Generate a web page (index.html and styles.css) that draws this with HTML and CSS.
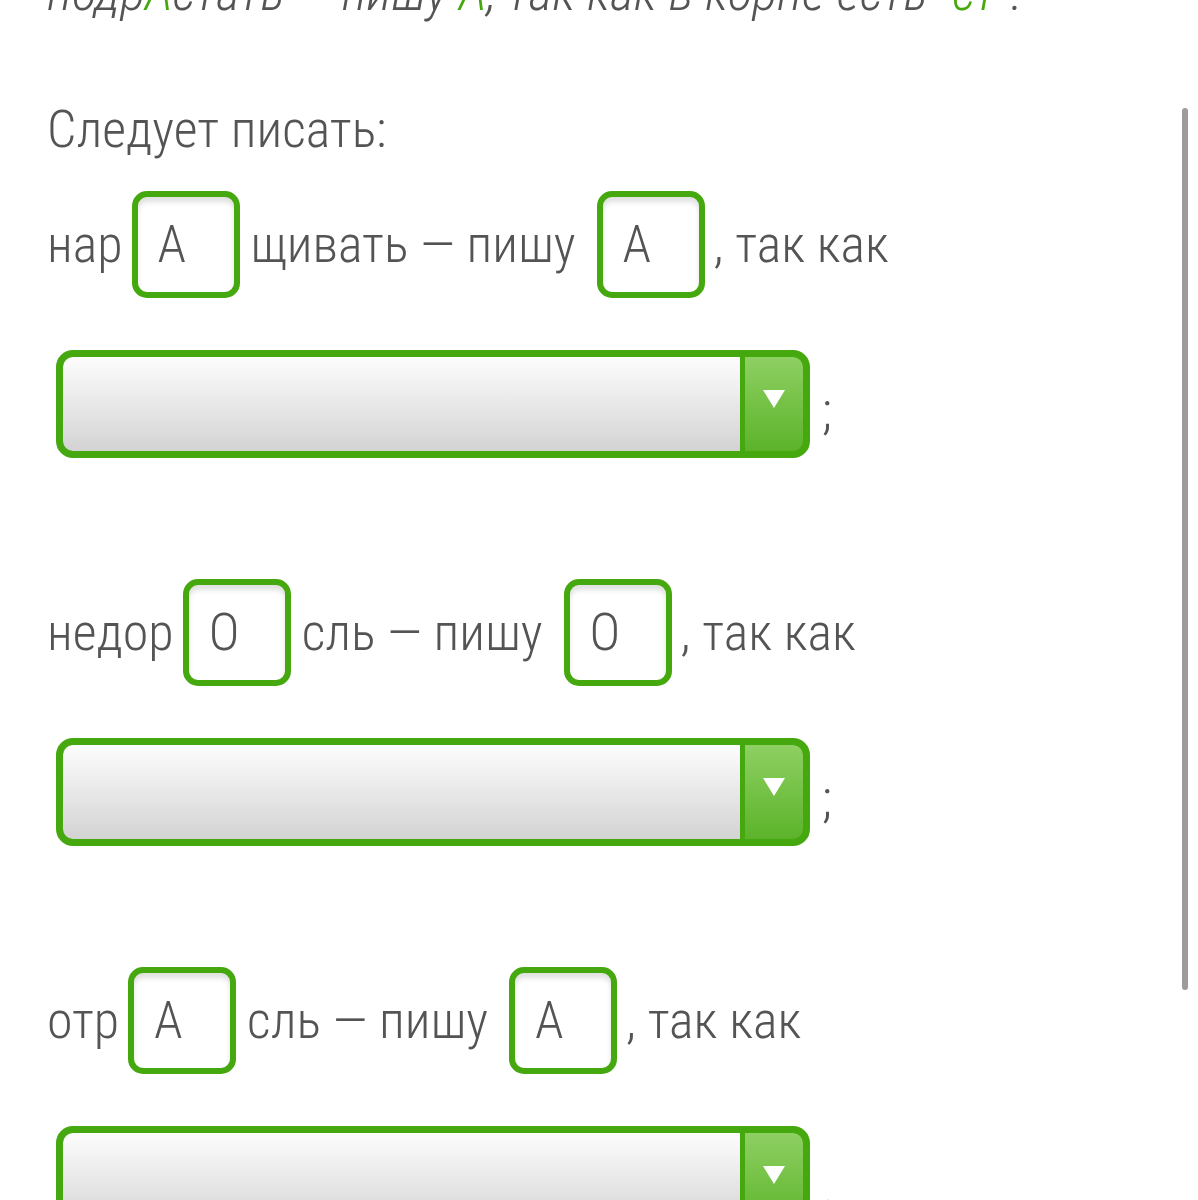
FILE: index.html
```html
<!DOCTYPE html>
<html lang="ru">
<head>
    <meta charset="UTF-8" />
    <title>Следует писать</title>
    <link rel="stylesheet" href="styles.css">
</head>
<body>
    <div class="page">
        <!-- previous answer, scrolled off the top -->
        <p class="prev">подр<span class="hl">А</span>стать — пишу <span class="hl">А</span>, так как в корне есть "<span class="hl">ст</span>".</p>

        <p class="lead">Следует писать:</p>

        <div class="task">
            <div class="line">
                <span>нар</span>
                <span class="cell">А</span>
                <span>щивать — пишу</span>
                <span class="cell wide">А</span>
                <span class="after">, так как</span>
            </div>
            <div class="pick">
                <div class="sel"><span class="field"></span><span class="btn"><i class="arrow"></i></span></div>
                <span class="tail">;</span>
            </div>
        </div>

        <div class="task">
            <div class="line">
                <span>недор</span>
                <span class="cell">О</span>
                <span>сль — пишу</span>
                <span class="cell wide">О</span>
                <span class="after">, так как</span>
            </div>
            <div class="pick">
                <div class="sel"><span class="field"></span><span class="btn"><i class="arrow"></i></span></div>
                <span class="tail">;</span>
            </div>
        </div>

        <div class="task">
            <div class="line">
                <span>отр</span>
                <span class="cell">А</span>
                <span>сль — пишу</span>
                <span class="cell wide">А</span>
                <span class="after">, так как</span>
            </div>
            <div class="pick">
                <div class="sel"><span class="field"></span><span class="btn"><i class="arrow"></i></span></div>
                <span class="tail">.</span>
            </div>
        </div>
    </div>

    <div class="scrollbar"></div>
</body>
</html>
```

FILE: styles.css
```css
* {
    margin: 0;
    padding: 0;
    box-sizing: border-box;
}

html,
body {
    height: 100%;
    overflow: hidden;
}

body {
    font-family: Roboto, "Noto Sans", sans-serif;
    font-weight: 300;
    font-size: 52px;
    font-stretch: condensed;
    color: #545454;
    background: #fff;
}

.page {
    padding: 0 0 0 47px;
    margin-top: -37px;
}

.prev {
    font-style: italic;
    line-height: 60px;
    height: 60px;
}

.hl {
    color: #46a80f;
}

.lead {
    line-height: 60px;
    margin-top: 77px;
}

/* task rows */
.task {
    display: flex;
    flex-direction: column;
    gap: 52px;
    margin-top: 31px;
}

.task + .task {
    margin-top: 121px;
}

.line {
    display: flex;
    align-items: center;
    height: 107px;
    white-space: nowrap;
}

.cell {
    width: 108px;
    height: 107px;
    margin: 0 11px 0 9px;
    padding-left: 20px;
    display: flex;
    align-items: center;
    border: 6px solid #46a80f;
    border-radius: 15px;
    box-shadow: inset 0 5px 5px rgba(0, 0, 0, 0.12);
    background: #fff;
}

.cell.wide {
    margin-left: 21px;
    margin-right: 9px;
}

/* dropdown */
.pick {
    display: flex;
    align-items: center;
    padding-left: 9px;
}

.sel {
    display: flex;
    width: 754px;
    height: 108px;
    border: 7px solid #46a80f;
    border-radius: 17px;
    overflow: hidden;
    background: #46a80f;
}

.field {
    flex: 1;
    background: linear-gradient(to bottom, #fdfdfd, #d3d3d3);
    border-radius: 8px 0 0 8px;
}

.btn {
    width: 58px;
    margin-left: 5px;
    display: flex;
    justify-content: center;
    align-items: center;
    padding-bottom: 10px;
    background: linear-gradient(to bottom, #8ed063, #5cb32a);
    border-radius: 0 9px 9px 0;
}

.arrow {
    width: 0;
    height: 0;
    border-left: 11px solid transparent;
    border-right: 11px solid transparent;
    border-top: 18px solid #fff;
}

.tail {
    margin-left: 12px;
    padding-top: 12px;
}

.scrollbar {
    position: fixed;
    right: 10px;
    top: 108px;
    width: 6px;
    height: 882px;
    border-radius: 3px;
    background: #9c9c9c;
}
```
